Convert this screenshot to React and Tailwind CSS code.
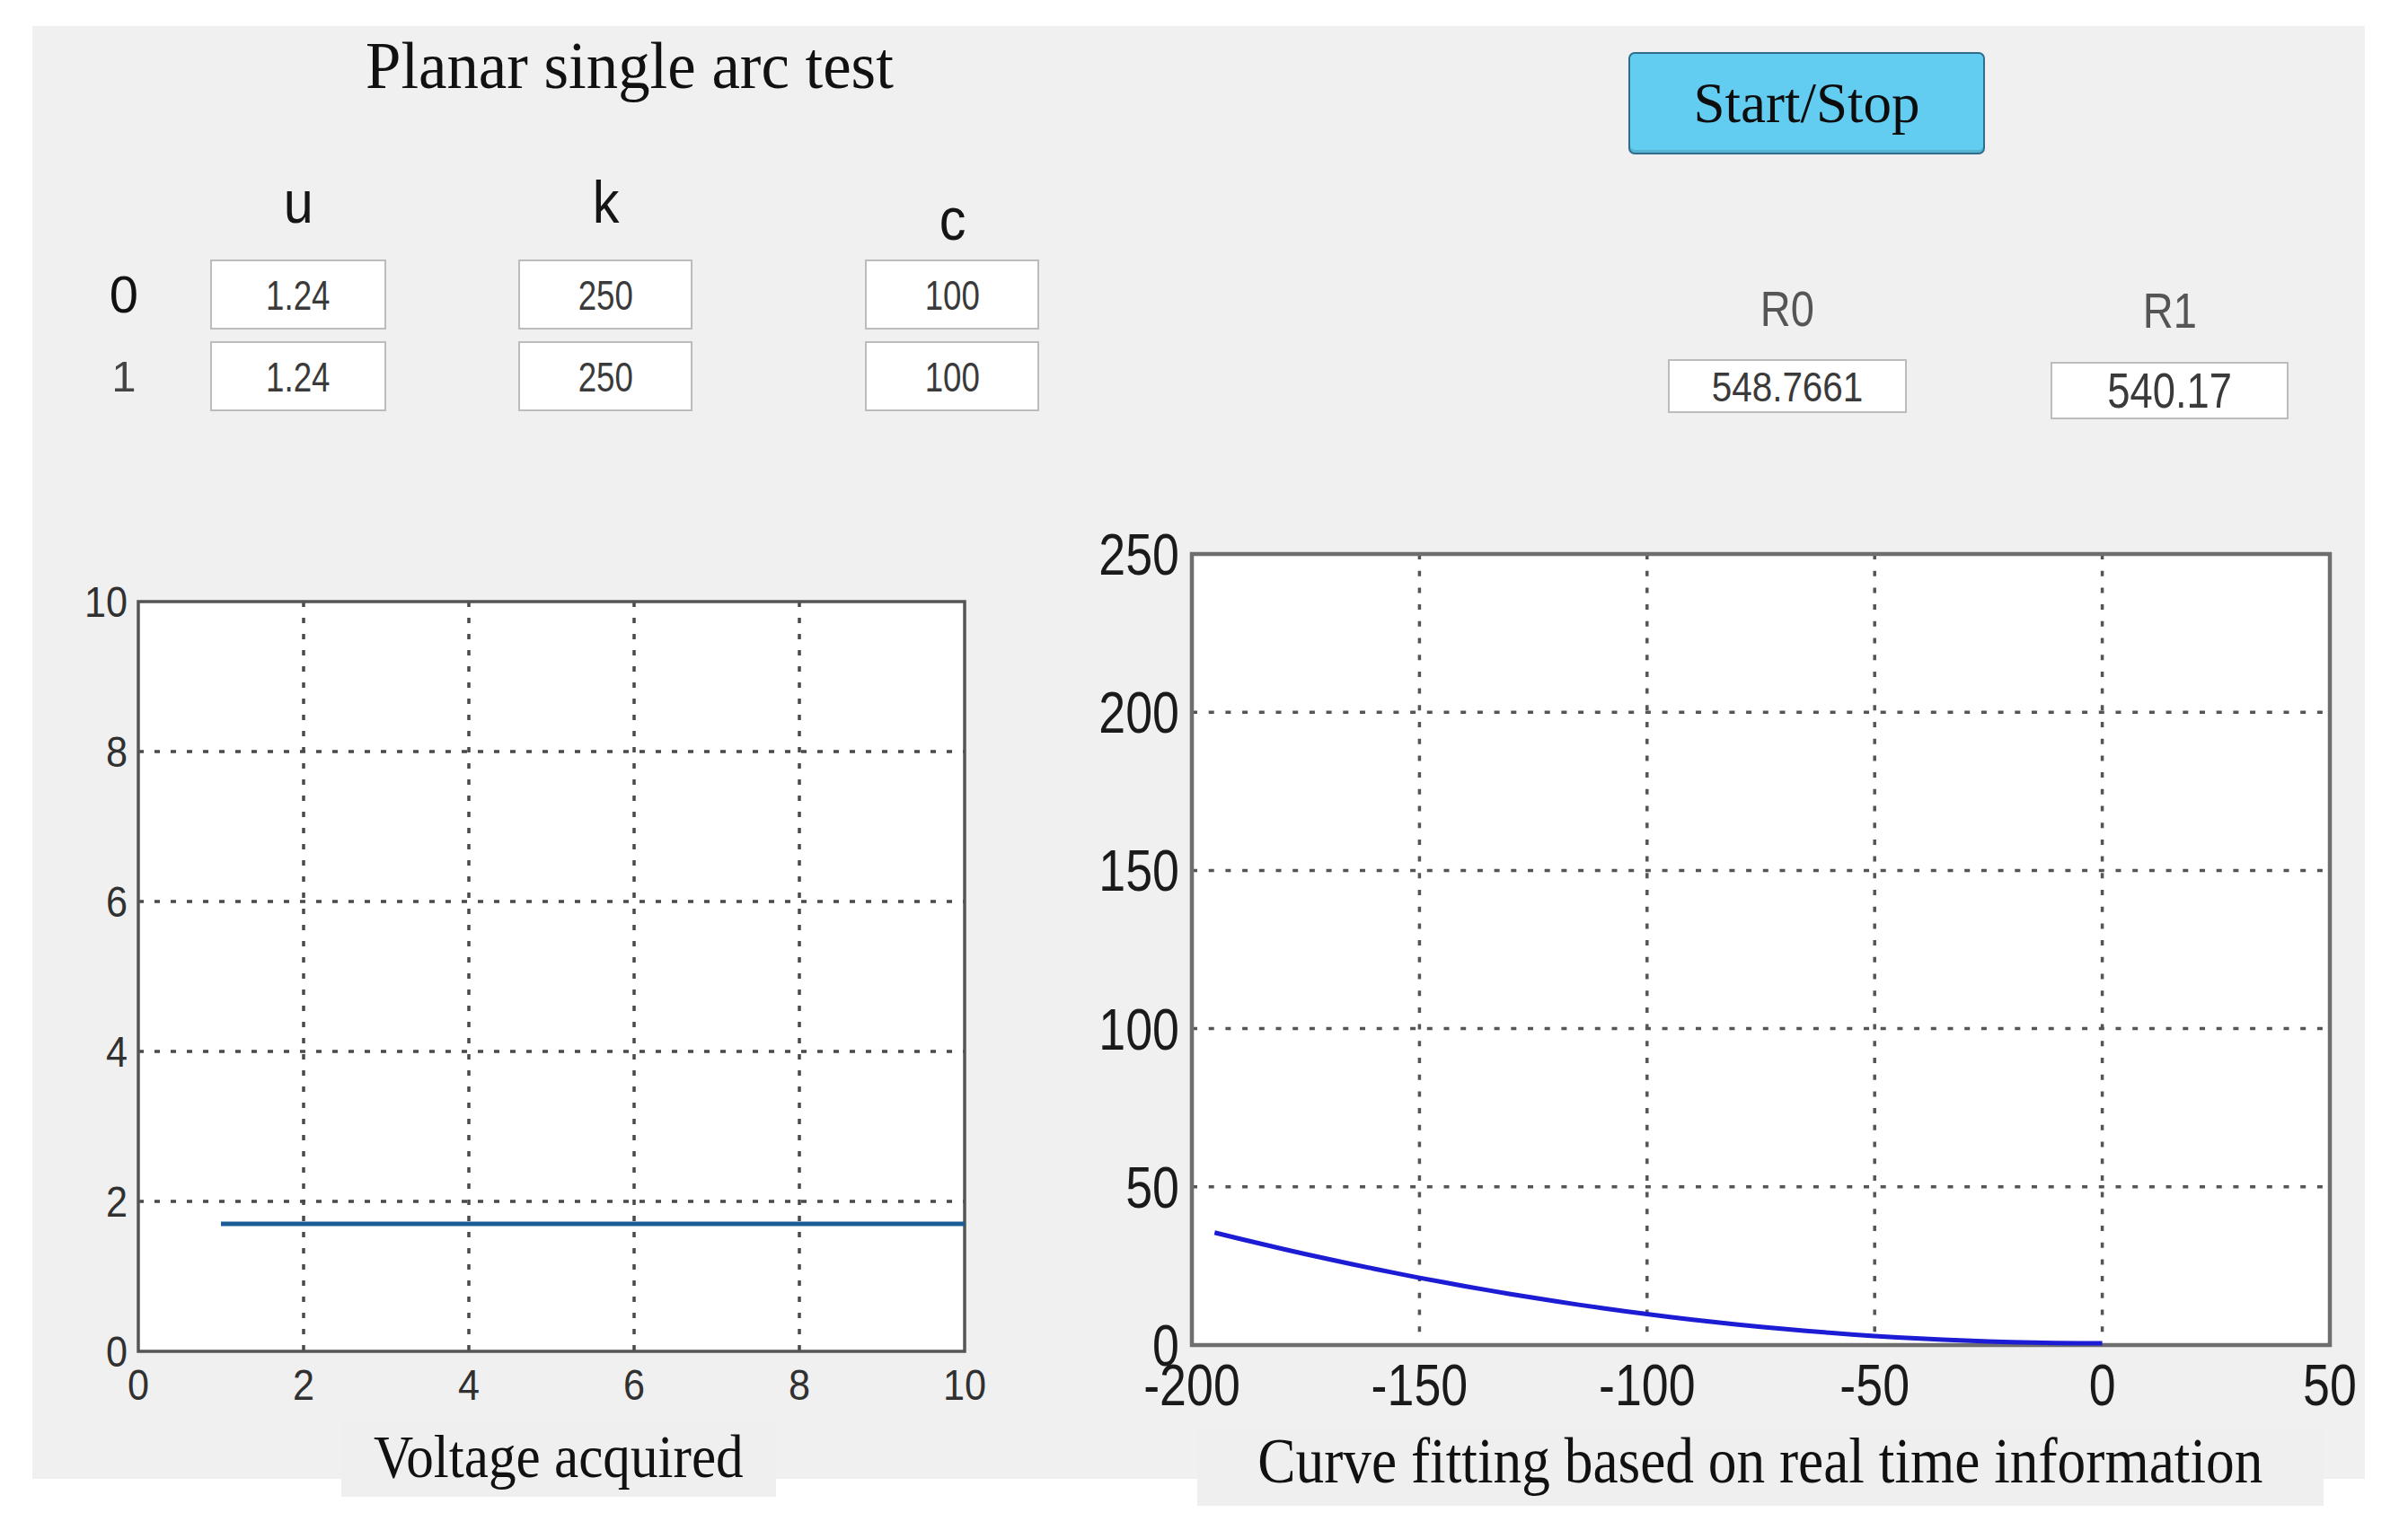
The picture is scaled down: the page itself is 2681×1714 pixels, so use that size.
import React from 'react';

const sans = 'Liberation Sans, Arial, sans-serif';

// data for the fitted curve on the right plot: y ~ a*x^2, plotted on x [-200, 50], y [0, 250]
const curvePoints = [];
for (let x = -195; x <= 0; x += 5) {
  const px = 177 + (x + 200) * 5.068;
  const py = 936 - 0.00092 * x * x * 3.524;
  curvePoints.push(`${px.toFixed(1)},${py.toFixed(1)}`);
}

function Field({ value, className, textClass }) {
  return (
    <div className={`flex shrink-0 items-center justify-center border-2 border-[#bcbcbc] bg-white ${className}`}>
      <span className={`inline-block leading-none text-[#3a3a3a] ${textClass}`}>{value}</span>
    </div>
  );
}

function Chart({ w, h, x0, y0, x1, y1, xLabels, yLabels, fontSize, squeeze, labelColor, yLabelRight, xLabelY, borderColor, borderWidth, gridColor, dash, children }) {
  const xs = xLabels.map((_, i) => x0 + ((x1 - x0) * i) / (xLabels.length - 1));
  const ys = yLabels.map((_, i) => y1 - ((y1 - y0) * i) / (yLabels.length - 1));
  const shift = fontSize * 0.358;

  return (
    <svg width={w} height={h} viewBox={`0 0 ${w} ${h}`} className="block">
      <rect x={x0} y={y0} width={x1 - x0} height={y1 - y0} fill="#ffffff" />
      {xs.slice(1, -1).map((x) => (
        <line key={`gx${x}`} x1={x} y1={y0} x2={x} y2={y1} stroke={gridColor} strokeWidth="3.5" strokeDasharray={dash} />
      ))}
      {ys.slice(1, -1).map((y) => (
        <line key={`gy${y}`} x1={x0} y1={y} x2={x1} y2={y} stroke={gridColor} strokeWidth="3.5" strokeDasharray={dash} />
      ))}
      <rect x={x0} y={y0} width={x1 - x0} height={y1 - y0} fill="none" stroke={borderColor} strokeWidth={borderWidth} />
      {children}
      {yLabels.map((label, i) => (
        <text
          key={`yl${label}`}
          transform={`translate(${yLabelRight} ${ys[i] + shift}) scale(${squeeze} 1)`}
          textAnchor="end"
          fontFamily={sans}
          fontSize={fontSize}
          fill={labelColor}
        >
          {label}
        </text>
      ))}
      {xLabels.map((label, i) => (
        <text
          key={`xl${label}`}
          transform={`translate(${xs[i]} ${xLabelY}) scale(${squeeze} 1)`}
          textAnchor="middle"
          fontFamily={sans}
          fontSize={fontSize}
          fill={labelColor}
        >
          {label}
        </text>
      ))}
    </svg>
  );
}

export default function App() {
  return (
    <main className="h-[1714px] w-[2681px] bg-white pl-[36px] pt-[29px] font-['Liberation_Sans',Arial,sans-serif]">
      <div className="flex h-[1618px] w-[2597px] bg-[#f0f0f0]">
        {/* left half: parameters + voltage plot */}
        <section className="w-[1114px] shrink-0">
          <h1 className="ml-[371px] mt-[8px] h-[72px] w-fit origin-left scale-x-[0.944] whitespace-nowrap font-['Liberation_Serif','Times_New_Roman',serif] text-[75px] font-normal leading-[72px] text-[#111]">
            Planar single arc test
          </h1>

          <div className="mt-[83px] flex h-[97px] items-start text-[66px] leading-[66px] text-[#151515]">
            <div className="w-[198px] shrink-0" />
            <div className="w-[196px] shrink-0 text-center">
              <span className="inline-block scale-x-[0.9]">u</span>
            </div>
            <div className="ml-[147px] w-[194px] shrink-0 text-center">
              <span className="inline-block scale-x-[0.9]">k</span>
            </div>
            <div className="ml-[192px] mt-[19px] w-[194px] shrink-0 text-center">
              <span className="inline-block scale-x-[0.9]">c</span>
            </div>
          </div>

          <div className="flex h-[78px] items-center">
            <span className="w-[204px] shrink-0 text-center text-[58px] leading-none text-[#111]">0</span>
            <Field value="1.24" className="-ml-[6px] h-[78px] w-[196px]" textClass="text-[47px] scale-x-[0.78]" />
            <Field value="250" className="ml-[147px] h-[78px] w-[194px]" textClass="text-[47px] scale-x-[0.78]" />
            <Field value="100" className="ml-[192px] h-[78px] w-[194px]" textClass="text-[47px] scale-x-[0.78]" />
          </div>
          <div className="mt-[13px] flex h-[78px] items-center">
            <span className="w-[204px] shrink-0 text-center text-[49px] leading-none text-[#444]">1</span>
            <Field value="1.24" className="-ml-[6px] h-[78px] w-[196px]" textClass="text-[47px] scale-x-[0.78]" />
            <Field value="250" className="ml-[147px] h-[78px] w-[194px]" textClass="text-[47px] scale-x-[0.78]" />
            <Field value="100" className="ml-[192px] h-[78px] w-[194px]" textClass="text-[47px] scale-x-[0.78]" />
          </div>

          <div className="mt-[162px]">
            <Chart
              w={1114}
              h={960}
              x0={118}
              y0={50}
              x1={1038}
              y1={885}
              xLabels={['0', '2', '4', '6', '8', '10']}
              yLabels={['0', '2', '4', '6', '8', '10']}
              fontSize={48}
              squeeze={0.9}
              labelColor="#303030"
              yLabelRight={106}
              xLabelY={939}
              borderColor="#555555"
              borderWidth={3.5}
              gridColor="#4a4a4a"
              dash="6 12"
            >
              <line x1="210" y1="743" x2="1038" y2="743" stroke="#1b5c97" strokeWidth="5" />
            </Chart>
          </div>

          <div className="ml-[344px] mt-[5px] flex h-[82px] w-[484px] justify-center bg-[#efefef] pt-[3px]">
            <span className="inline-block scale-x-[0.9] whitespace-nowrap font-['Liberation_Serif','Times_New_Roman',serif] text-[68px] leading-none text-[#111]">
              Voltage acquired
            </span>
          </div>
        </section>

        {/* right half: control button, results, fitted curve */}
        <section className="w-[1483px] shrink-0">
          <button className="ml-[663px] mt-[29px] flex h-[114px] w-[397px] items-center justify-center rounded-[7px] border-2 border-[#2f6d8c] bg-[#62cdf0] font-['Liberation_Serif','Times_New_Roman',serif] text-[63px] leading-none text-[#0d0d0d] shadow-[inset_0_-3px_0_rgba(0,0,0,0.12)]">
            Start/Stop
          </button>

          <div className="ml-[707px] mt-[144px] flex h-[151px] gap-[160px]">
            <div className="flex w-[266px] shrink-0 flex-col items-center">
              <span className="inline-block h-[56px] shrink-0 scale-x-[0.84] text-[56px] leading-[56px] text-[#555]">R0</span>
              <Field value="548.7661" className="mt-[28px] h-[60px] w-[266px] border-[#aaaaaa]" textClass="text-[47px] scale-x-[0.86]" />
            </div>
            <div className="mt-[2px] flex w-[265px] shrink-0 flex-col items-center">
              <span className="inline-block h-[56px] shrink-0 scale-x-[0.84] text-[56px] leading-[56px] text-[#555]">R1</span>
              <Field value="540.17" className="mt-[29px] h-[64px] w-[265px] border-[#aaaaaa]" textClass="text-[56px] scale-x-[0.81]" />
            </div>
          </div>

          <div className="mt-[93px]">
            <Chart
              w={1483}
              h={1020}
              x0={177}
              y0={57}
              x1={1444}
              y1={938}
              xLabels={['-200', '-150', '-100', '-50', '0', '50']}
              yLabels={['0', '50', '100', '150', '200', '250']}
              fontSize={64}
              squeeze={0.84}
              labelColor="#1a1a1a"
              yLabelRight={163}
              xLabelY={1005}
              borderColor="#6e6e6e"
              borderWidth={4.5}
              gridColor="#555555"
              dash="6 12.7"
            >
              <polyline points={curvePoints.join(' ')} fill="none" stroke="#1c1cd4" strokeWidth="5" />
            </Chart>
          </div>

          <div className="ml-[183px] mt-[10px] flex h-[87px] w-[1254px] justify-center bg-[#efefef] pt-[1px]">
            <span className="inline-block scale-x-[0.88] whitespace-nowrap font-['Liberation_Serif','Times_New_Roman',serif] text-[72px] leading-none text-[#111]">
              Curve fitting based on real time information
            </span>
          </div>
        </section>
      </div>
    </main>
  );
}
